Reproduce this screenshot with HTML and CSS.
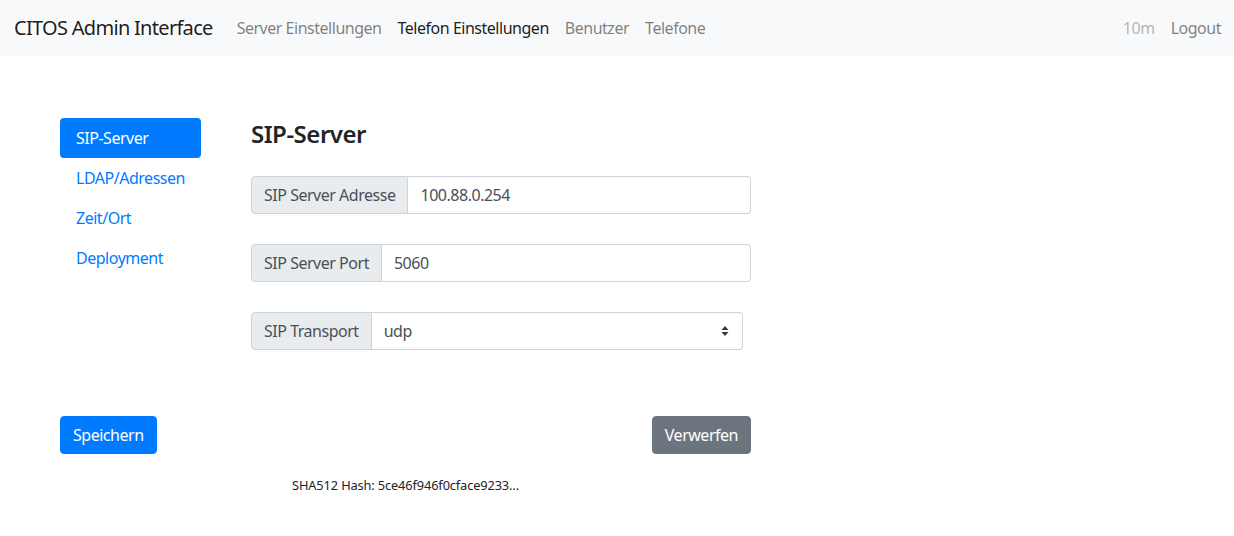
FILE: index.html
```html
<!DOCTYPE html>
<html lang="de">
<head>
<meta charset="utf-8">
<title>CITOS Admin Interface</title>
<link rel="stylesheet" href="styles.css">
</head>
<body>
<nav class="navbar">
  <a class="brand" href="#">CITOS Admin Interface</a>
  <ul class="nav-main">
    <li><a class="nav-link" href="#">Server Einstellungen</a></li>
    <li><a class="nav-link active" href="#">Telefon Einstellungen</a></li>
    <li><a class="nav-link" href="#">Benutzer</a></li>
    <li><a class="nav-link" href="#">Telefone</a></li>
  </ul>
  <div class="nav-right">
    <span class="nav-link timer">10m</span>
    <a class="nav-link" href="#">Logout</a>
  </div>
</nav>
<main class="page">
  <div class="layout">
    <ul class="pills">
      <li><a class="pill active" href="#">SIP-Server</a></li>
      <li><a class="pill" href="#">LDAP/Adressen</a></li>
      <li><a class="pill" href="#">Zeit/Ort</a></li>
      <li><a class="pill" href="#">Deployment</a></li>
    </ul>
    <section class="content">
      <h4 class="title">SIP-Server</h4>
      <div class="input-group">
        <span class="ig-text">SIP Server Adresse</span>
        <input class="ig-control" type="text" value="100.88.0.254">
      </div>
      <div class="input-group">
        <span class="ig-text">SIP Server Port</span>
        <input class="ig-control" type="text" value="5060">
      </div>
      <div class="input-group select-group">
        <span class="ig-text">SIP Transport</span>
        <div class="ig-control select">
          <span>udp</span>
          <svg class="caret" width="8" height="12" viewBox="0 0 8 12"><path d="M4 1 L7.5 5 H0.5 Z M4 11 L0.5 7 H7.5 Z" fill="#343a40"/></svg>
        </div>
      </div>
    </section>
  </div>
  <div class="actions">
    <button class="btn btn-primary">Speichern</button>
    <button class="btn btn-secondary">Verwerfen</button>
  </div>
  <p class="hash">SHA512 Hash: 5ce46f946f0cface9233...</p>
</main>
</body>
</html>
```
FILE: styles.css
```css
* { box-sizing: border-box; }
body {
  margin: 0;
  font-family: "Noto Sans", "Open Sans", sans-serif;
  font-size: 16px;
  line-height: 1.5;
  letter-spacing: -0.03em;
  color: #212529;
  background: #fff;
}
a { text-decoration: none; }
ul { list-style: none; margin: 0; padding: 0; }

.navbar {
  height: 56px;
  background: #f8f9fa;
  display: flex;
  align-items: center;
  padding: 0 5px 0 14px;
}
.brand {
  font-size: 20px;
  letter-spacing: -0.035em;
  color: rgba(0,0,0,.9);
  margin-right: 16px;
  line-height: 30px;
}
.nav-main { display: flex; flex: 1; }
.nav-link {
  display: block;
  padding: 8px 8px;
  color: rgba(0,0,0,.5);
}
.nav-link.active { color: rgba(0,0,0,.9); }
.nav-right { display: flex; }
.timer { color: rgba(0,0,0,.3); }

.page { padding: 62px 0 0 60px; width: 751px; }
.layout { display: flex; gap: 50px; }
.pills { width: 141px; flex: none; }
.pill {
  display: block;
  padding: 8px 16px;
  color: #007bff;
  border-radius: 4px;
  line-height: 24px;
}
.pill.active { background: #007bff; color: #fff; }

.content { flex: 1; }
.title {
  margin: 0 0 26px;
  font-size: 24px;
  font-weight: 600;
  line-height: 32px;
}
.input-group {
  display: flex;
  height: 38px;
  margin-bottom: 30px;
}
.ig-text {
  display: flex;
  align-items: center;
  padding: 0 12px;
  background: #e9ecef;
  border: 1px solid #ced4da;
  border-radius: 4px 0 0 4px;
  color: #495057;
  white-space: nowrap;
}
.ig-control {
  flex: 1;
  min-width: 0;
  border: 1px solid #ced4da;
  border-left: none;
  border-radius: 0 4px 4px 0;
  padding: 0 12px;
  font: inherit;
  letter-spacing: inherit;
  color: #495057;
  background: #fff;
}
.select-group { width: 492px; }
.select {
  display: flex;
  align-items: center;
  justify-content: space-between;
  padding-right: 13px;
}

.actions {
  display: flex;
  justify-content: space-between;
  margin-top: 36px;
}
.btn {
  font: inherit;
  letter-spacing: inherit;
  line-height: 24px;
  padding: 6px 12px;
  border: 1px solid transparent;
  border-radius: 4px;
  color: #fff;
}
.btn-primary { background: #007bff; border-color: #007bff; }
.btn-secondary { background: #6c757d; border-color: #6c757d; }
.hash {
  text-align: center;
  font-size: 12.8px;
  letter-spacing: -0.01em;
  margin: 22px 0 0;
}
```
